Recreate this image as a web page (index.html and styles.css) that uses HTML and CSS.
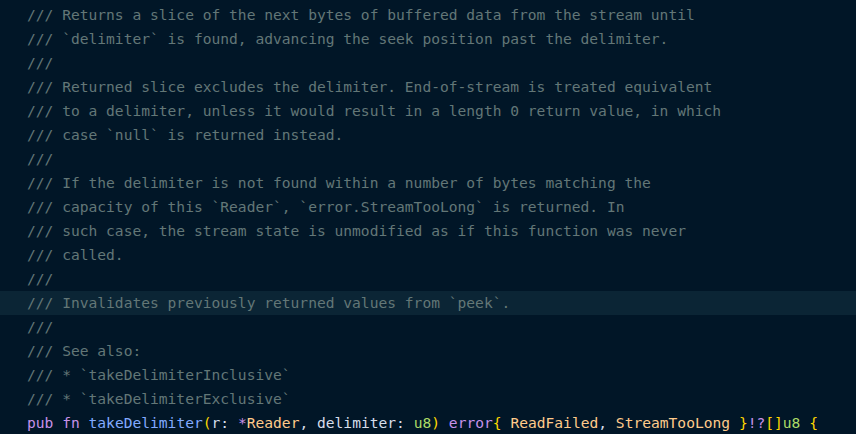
FILE: index.html
```html
<!DOCTYPE html>
<html>
<head>
<meta charset="utf-8">
<link rel="stylesheet" href="styles.css">
</head>
<body>
<div class="editor">
<div class="line"><span class="c">/// Returns a slice of the next bytes of buffered data from the stream until</span></div>
<div class="line"><span class="c">/// `delimiter` is found, advancing the seek position past the delimiter.</span></div>
<div class="line"><span class="c">///</span></div>
<div class="line"><span class="c">/// Returned slice excludes the delimiter. End-of-stream is treated equivalent</span></div>
<div class="line"><span class="c">/// to a delimiter, unless it would result in a length 0 return value, in which</span></div>
<div class="line"><span class="c">/// case `null` is returned instead.</span></div>
<div class="line"><span class="c">///</span></div>
<div class="line"><span class="c">/// If the delimiter is not found within a number of bytes matching the</span></div>
<div class="line"><span class="c">/// capacity of this `Reader`, `error.StreamTooLong` is returned. In</span></div>
<div class="line"><span class="c">/// such case, the stream state is unmodified as if this function was never</span></div>
<div class="line"><span class="c">/// called.</span></div>
<div class="line"><span class="c">///</span></div>
<div class="line current"><span class="c">/// Invalidates previously returned values from `peek`.</span></div>
<div class="line"><span class="c">///</span></div>
<div class="line"><span class="c">/// See also:</span></div>
<div class="line"><span class="c">/// * `takeDelimiterInclusive`</span></div>
<div class="line"><span class="c">/// * `takeDelimiterExclusive`</span></div>
<div class="line"><span class="k">pub</span> <span class="k">fn</span> <span class="f">takeDelimiter</span><span class="b">(</span><span class="v">r: </span><span class="k">*</span><span class="t">Reader</span><span class="v">, delimiter: </span><span class="g">u8</span><span class="b">)</span> <span class="k">error</span><span class="b">{</span> <span class="t">ReadFailed</span><span class="v">,</span> <span class="t">StreamTooLong</span> <span class="b">}</span><span class="k">!?</span><span class="b">[]</span><span class="g">u8</span> <span class="b">{</span></div>
</div>
</body>
</html>
```
FILE: styles.css
```css
html, body {
  margin: 0;
  padding: 0;
  background: #011627;
}
.editor {
  padding-top: 3px;
  font-family: "DejaVu Sans Mono", monospace;
  font-size: 14.6px;
  line-height: 24px;
  color: #d6deeb;
}
.line {
  height: 24px;
  padding-left: 27px;
  white-space: pre;
}
.line.current {
  background: #0b2535;
}
.c { color: #637777; }
.k { color: #c792ea; }
.f { color: #82aaff; }
.b { color: #ffd700; }
.v { color: #d6deeb; }
.t { color: #ffcb8b; }
.g { color: #addb67; }
```
